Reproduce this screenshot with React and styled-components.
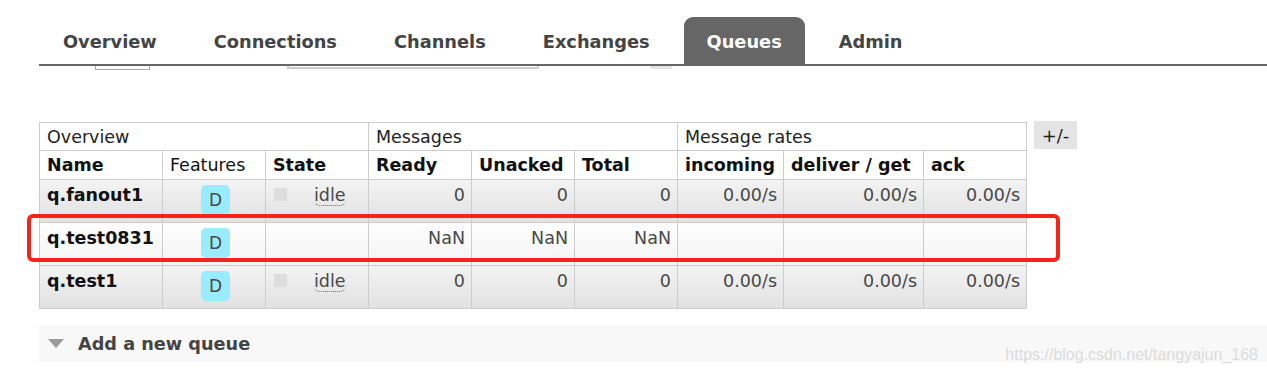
import React from "react";
import styled, { createGlobalStyle } from "styled-components";

const GlobalStyle = createGlobalStyle`
  body {
    margin: 0;
    background: #fff;
    font-family: "DejaVu Sans", Verdana, sans-serif;
    color: #484848;
  }
`;

const Page = styled.div`
  position: relative;
  width: 1267px;
  height: 374px;
  overflow: hidden;
`;

const Menu = styled.ul`
  display: flex;
  list-style: none;
  margin: 17px 0 0 39px;
  padding: 0 0 0 1px;
  height: 47px;
  border-bottom: 2px solid #666;
`;

const Tab = styled.li`
  display: flex;
  align-items: center;
  padding: 1px 23px 0;
  margin-right: 11px;
  font-size: 17.8px;
  font-weight: bold;
  color: ${(p) => (p.$active ? "#fff" : "#444")};
  background: ${(p) => (p.$active ? "#666" : "transparent")};
  border-radius: 9px 9px 0 0;
`;

const Strip = styled.div`
  display: flex;
  align-items: flex-start;
  height: 5px;
`;

const Piece = styled.div`
  box-sizing: border-box;
  margin-left: ${(p) => p.$gap}px;
  width: ${(p) => p.$w}px;
  height: ${(p) => p.$h}px;
  border: ${(p) => p.$border || "none"};
  border-top: none;
  background: ${(p) => p.$fill || "transparent"};
`;

const Content = styled.div`
  display: flex;
  align-items: flex-start;
  gap: 7px;
  margin: 50px 0 0 39px;
`;

const TableWrap = styled.div`
  position: relative;
`;

const Table = styled.table`
  border-collapse: collapse;
  table-layout: fixed;
  font-size: 17.5px;
  margin-top: 1px;
`;

const GroupHead = styled.th`
  height: 27px;
  padding: 0 7px;
  text-align: left;
  font-weight: normal;
  color: #222;
  border: 1px solid #ccc;
  background: #fff;
`;

const ColHead = styled.th`
  height: 28px;
  padding: 0 7px;
  text-align: left;
  font-weight: ${(p) => (p.$normal ? "normal" : "bold")};
  color: #111;
  border: 1px solid #ccc;
  background: #fff;
  white-space: nowrap;
`;

const Row = styled.tr`
  background: ${(p) =>
    p.$alt
      ? "linear-gradient(#fefefe, #f3f3f3)"
      : "linear-gradient(#f3f3f3, #e1e1e1)"};
`;

const Cell = styled.td`
  height: 43px;
  box-sizing: border-box;
  padding: 5px 6px 0 7px;
  vertical-align: top;
  line-height: 21px;
  border: 1px solid #ccc;
  text-align: ${(p) => p.$align || "left"};
  white-space: nowrap;
`;

const NameCell = styled(Cell)`
  font-weight: bold;
  color: #111;
`;

const Badge = styled.span`
  display: inline-flex;
  align-items: center;
  justify-content: center;
  width: 29px;
  height: 30px;
  margin-left: 2px;
  border-radius: 5px;
  background: #99ebff;
  color: #484848;
  font-size: 17px;
`;

const StateBox = styled.div`
  display: flex;
  align-items: center;
  height: 21px;
`;

const Square = styled.span`
  width: 13px;
  height: 13px;
  margin-top: -3px;
  margin-left: 1px;
  background: #ddd;
`;

const Abbr = styled.span`
  margin-left: 27px;
  border-bottom: 1px dotted #666;
  border-radius: 0 0 6px 6px;
  line-height: 20px;
`;

const Toggle = styled.div`
  width: 43px;
  height: 28px;
  display: flex;
  align-items: center;
  justify-content: center;
  background: #e4e4e4;
  color: #222;
  font-size: 18px;
`;

const Highlight = styled.div`
  position: absolute;
  left: -12px;
  top: 93px;
  width: 1033px;
  height: 48px;
  box-sizing: border-box;
  border: 4px solid #f7221a;
  border-radius: 6px;
  pointer-events: none;
`;

const Section = styled.div`
  display: flex;
  align-items: center;
  gap: 14px;
  height: 37px;
  margin: 16px 0 0 39px;
  padding-left: 9px;
  background: #f8f8f8;
  font-size: 17.7px;
  font-weight: bold;
  color: #444;
`;

const Watermark = styled.div`
  position: absolute;
  right: 9px;
  bottom: 10px;
  font-family: "Liberation Sans", Arial, sans-serif;
  font-size: 16px;
  color: #dcdcdc;
`;

const tabs = ["Overview", "Connections", "Channels", "Exchanges", "Queues", "Admin"];
const widths = [123, 103, 103, 103, 103, 103, 106, 140, 103];

const queues = [
  { name: "q.fanout1", idle: true, ready: "0", unacked: "0", total: "0", rates: ["0.00/s", "0.00/s", "0.00/s"] },
  { name: "q.test0831", idle: false, ready: "NaN", unacked: "NaN", total: "NaN", rates: ["", "", ""], alt: true },
  { name: "q.test1", idle: true, ready: "0", unacked: "0", total: "0", rates: ["0.00/s", "0.00/s", "0.00/s"] },
];

export default function App() {
  return (
    <Page>
      <GlobalStyle />
      <Menu>
        {tabs.map((t) => (
          <Tab key={t} $active={t === "Queues"}>
            {t}
          </Tab>
        ))}
      </Menu>
      <Strip>
        <Piece $gap={95} $w={55} $h={4} $border="1px solid #aaa" />
        <Piece $gap={137} $w={252} $h={3} $border="2px solid #ccc" />
        <Piece $gap={111} $w={22} $h={3} $fill="#e4e4e4" />
      </Strip>
      <Content>
        <TableWrap>
          <Table>
            <colgroup>
              {widths.map((w, i) => (
                <col key={i} style={{ width: w }} />
              ))}
            </colgroup>
            <thead>
              <tr>
                <GroupHead colSpan={3}>Overview</GroupHead>
                <GroupHead colSpan={3}>Messages</GroupHead>
                <GroupHead colSpan={3}>Message rates</GroupHead>
              </tr>
              <tr>
                <ColHead>Name</ColHead>
                <ColHead $normal>Features</ColHead>
                <ColHead>State</ColHead>
                <ColHead>Ready</ColHead>
                <ColHead>Unacked</ColHead>
                <ColHead>Total</ColHead>
                <ColHead>incoming</ColHead>
                <ColHead>deliver / get</ColHead>
                <ColHead>ack</ColHead>
              </tr>
            </thead>
            <tbody>
              {queues.map((q) => (
                <Row key={q.name} $alt={q.alt}>
                  <NameCell>{q.name}</NameCell>
                  <Cell $align="center">
                    <Badge>D</Badge>
                  </Cell>
                  <Cell>
                    {q.idle && (
                      <StateBox>
                        <Square />
                        <Abbr>idle</Abbr>
                      </StateBox>
                    )}
                  </Cell>
                  <Cell $align="right">{q.ready}</Cell>
                  <Cell $align="right">{q.unacked}</Cell>
                  <Cell $align="right">{q.total}</Cell>
                  {q.rates.map((r, i) => (
                    <Cell key={i} $align="right">
                      {r}
                    </Cell>
                  ))}
                </Row>
              ))}
            </tbody>
          </Table>
          <Highlight />
        </TableWrap>
        <Toggle>+/-</Toggle>
      </Content>
      <Section>
        <svg width="16" height="10" viewBox="0 0 16 10">
          <path d="M0 0 L16 0 L8 9 Z" fill="#999" />
        </svg>
        Add a new queue
      </Section>
      <Watermark>https://blog.csdn.net/tangyajun_168</Watermark>
    </Page>
  );
}
